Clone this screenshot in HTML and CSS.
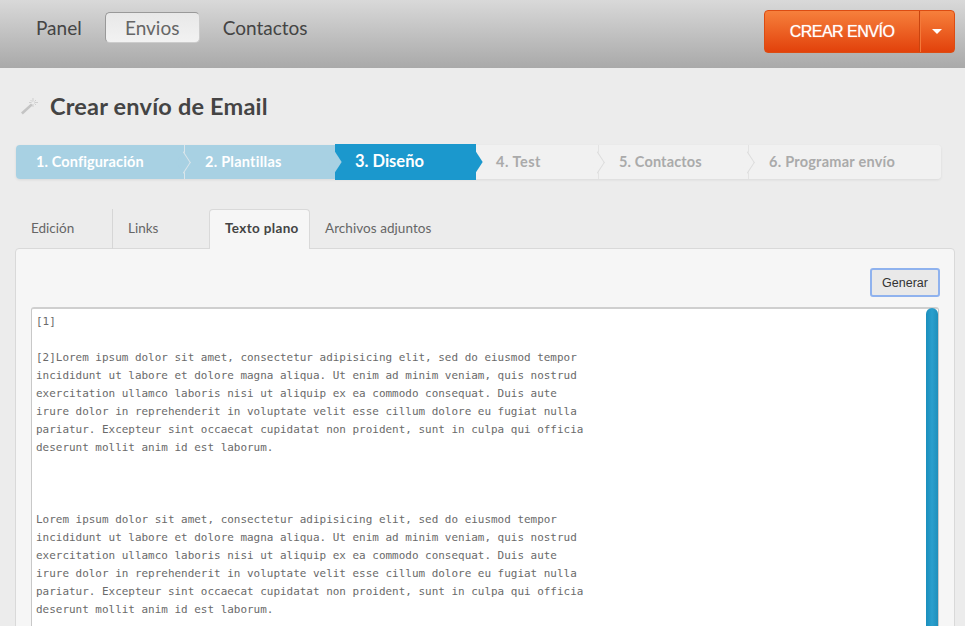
FILE: index.html
```html
<!DOCTYPE html>
<html lang="es">
<head>
  <meta charset="UTF-8">
  <meta name="viewport" content="width=device-width, initial-scale=1.0">
  <title>Crear envío de Email</title>
  <link rel="stylesheet" href="styles.css">
</head>
<body>
  <header class="topbar">
    <nav class="nav">
      <a class="nav-item">Panel</a>
      <a class="nav-item active">Envios</a>
      <a class="nav-item">Contactos</a>
    </nav>
    <div class="create-btn">
      <span class="create-main">CREAR ENVÍO</span>
      <span class="create-caret"><i></i></span>
    </div>
  </header>

  <main class="content">
    <h1 class="title">
      <svg class="wand" width="18" height="18" viewBox="0 0 18 18">
        <path d="M1 15.5 L11 6.5 L12.8 8.3 L2.8 17.5 Z" fill="#c4c4c4"/>
        <path d="M13 1v3.5M13 7v3M9 5.5h2.5M14.5 5.5H18M10.5 3l1.5 1.5M14.5 6.5 16 8M14.5 4.5 16 3" stroke="#cfcfcf" stroke-width="1" fill="none"/>
      </svg>
      Crear envío de Email
    </h1>

    <ol class="steps">
      <li class="step done s1">1. Configuración</li>
      <li class="step done s2">2. Plantillas</li>
      <li class="step current s3">3. Diseño</li>
      <li class="step s4">4. Test</li>
      <li class="step s5">5. Contactos</li>
      <li class="step s6">6. Programar envío</li>
    </ol>

    <ul class="tabs">
      <li class="tab t1">Edición</li>
      <li class="tab t2">Links</li>
      <li class="tab t3 active">Texto plano</li>
      <li class="tab t4">Archivos adjuntos</li>
    </ul>

    <section class="panel">
      <div class="panel-actions">
        <button class="generate" type="button">Generar</button>
      </div>
      <div class="plain-text">
        <pre>[1]

[2]Lorem ipsum dolor sit amet, consectetur adipisicing elit, sed do eiusmod tempor
incididunt ut labore et dolore magna aliqua. Ut enim ad minim veniam, quis nostrud
exercitation ullamco laboris nisi ut aliquip ex ea commodo consequat. Duis aute
irure dolor in reprehenderit in voluptate velit esse cillum dolore eu fugiat nulla
pariatur. Excepteur sint occaecat cupidatat non proident, sunt in culpa qui officia
deserunt mollit anim id est laborum.



Lorem ipsum dolor sit amet, consectetur adipisicing elit, sed do eiusmod tempor
incididunt ut labore et dolore magna aliqua. Ut enim ad minim veniam, quis nostrud
exercitation ullamco laboris nisi ut aliquip ex ea commodo consequat. Duis aute
irure dolor in reprehenderit in voluptate velit esse cillum dolore eu fugiat nulla
pariatur. Excepteur sint occaecat cupidatat non proident, sunt in culpa qui officia
deserunt mollit anim id est laborum.</pre>
        <div class="scroll-track"><div class="scroll-thumb"></div></div>
      </div>
    </section>
  </main>
</body>
</html>
```

FILE: styles.css
```css
* {
  margin: 0;
  padding: 0;
  box-sizing: border-box;
}

html, body {
  height: 626px;
  overflow: hidden;
}

body {
  background: #ececec;
  font-family: 'Lato', 'Open Sans', sans-serif;
  color: #444;
}

/* top bar */
.topbar {
  height: 68px;
  background: linear-gradient(to bottom, #d9d9d9, #a9a9a9);
  display: flex;
  justify-content: space-between;
  align-items: flex-start;
  padding: 10px 10px 0 36px;
}

.nav {
  display: flex;
  align-items: center;
  padding-top: 2px;
  height: 33px;
}

.nav-item {
  font-size: 19px;
  color: #444;
  height: 31px;
  line-height: 31px;
  margin-right: 23px;
}

.nav-item.active {
  width: 95px;
  text-align: center;
  line-height: 29px;
  color: #666;
  background: linear-gradient(to bottom, #e8e8e8, #f2f2f2);
  border: 1px solid #999;
  border-bottom-color: #ccc;
  border-right-color: #ccc;
  border-radius: 5px;
}

.create-btn {
  display: flex;
  width: 191px;
  height: 43px;
  color: #fff;
  background: linear-gradient(to bottom, #f6803c, #e2410b);
  border: 1px solid #dc4c12;
  border-radius: 4px;
}

.create-main {
  width: 155px;
  text-align: center;
  font-family: 'Liberation Sans', sans-serif;
  font-size: 16px;
  letter-spacing: -0.5px;
  line-height: 42px;
  text-shadow: 0 0 1px rgba(255, 255, 255, 0.7);
  border-right: 1px solid #c9440f;
}

.create-caret {
  flex: 1;
  display: flex;
  align-items: center;
  justify-content: center;
  box-shadow: inset 1px 0 0 #f4793a;
}

.create-caret i {
  border-top: 5px solid #fff;
  border-left: 5px solid transparent;
  border-right: 5px solid transparent;
}

/* page */
.content {
  padding: 0 10px 0 15px;
}

.title {
  display: flex;
  align-items: center;
  gap: 12px;
  height: 24px;
  margin: 26px 0 0 5px;
  font-size: 23.5px;
  letter-spacing: 0.2px;
  font-weight: 700;
  color: #444;
}

/* wizard steps */
.steps {
  list-style: none;
  display: flex;
  width: 925px;
  height: 34px;
  margin: 27px 0 0 1px;
  border-radius: 4px;
  box-shadow: 0 1px 3px rgba(0, 0, 0, 0.08);
}

.step {
  position: relative;
  height: 34px;
  line-height: 34px;
  font-size: 14.5px;
  letter-spacing: 0.25px;
  font-weight: 700;
  color: #aaa;
  background: #f1f1f1;
  padding-left: 20px;
}

.step.done {
  color: #fff;
  background: #a8d1e3;
}

.step.s1 { width: 169px; letter-spacing: 0.12px; border-radius: 4px 0 0 4px; }
.step.s2 { width: 150px; }
.step.s3 { width: 141px; }
.step.s4 { width: 123px; letter-spacing: 0.5px; }
.step.s5 { width: 150px; letter-spacing: 0.15px; }
.step.s6 { width: 192px; border-radius: 0 4px 4px 0; }

.step.current {
  height: 36px;
  margin-top: -1px;
  line-height: 35px;
  font-size: 16.5px;
  letter-spacing: 0;
  color: #fff;
  background: #1b98cd;
}

/* chevrons between the steps */
.step::after {
  content: "";
  position: absolute;
  z-index: 1;
  top: 11px;
  right: -6px;
  width: 12px;
  height: 12px;
  transform: rotate(45deg) skew(12deg, 12deg);
  background: inherit;
  border-top: 1px solid #dcdcdc;
  border-right: 1px solid #dcdcdc;
}

.step.done::after {
  border-color: #dbe6eb;
}

.step.current::after {
  top: 12px;
  border: 0;
}

.step.s2::after {
  border: 0;
}

.step.s1, .step.s4, .step.s5 {
  border-right: 1px solid #e3e3e3;
}

.step.s1 {
  border-right-color: #dbe6eb;
}

.step.s6::after {
  display: none;
}

/* tabs */
.tabs {
  list-style: none;
  display: flex;
  height: 40px;
  margin: 30px 0 0 1px;
  font-size: 13.5px;
  color: #666;
}

.tab {
  height: 40px;
  line-height: 38px;
  padding-left: 15px;
}

.tab.t1 { width: 97px; border-right: 1px solid #d6d6d6; }
.tab.t2 { width: 96px; }
.tab.t3 { width: 101px; }
.tab.t4 { letter-spacing: 0.05px; }

.tab.active {
  position: relative;
  z-index: 1;
  line-height: 37px;
  font-weight: 700;
  letter-spacing: 0.35px;
  color: #444;
  background: #f6f6f6;
  border: 1px solid #d9d9d9;
  border-bottom: 0;
  border-radius: 4px 4px 0 0;
}

/* panel */
.panel {
  background: #f6f6f6;
  border: 1px solid #d9d9d9;
  border-radius: 4px;
  height: 400px;
  margin-top: -1px;
  padding: 19px 15px 0;
}

.panel-actions {
  display: flex;
  justify-content: flex-end;
  height: 39px;
  margin-right: -1px;
}

.generate {
  width: 70px;
  height: 29px;
  font-family: 'Liberation Sans', sans-serif;
  font-size: 12.5px;
  color: #333;
  background: #e9e9e9;
  border: 2px solid #8fb2ee;
  border-radius: 3px;
}

.plain-text {
  position: relative;
  height: 340px;
  background: #fff;
  border: 1px solid #c8c8c8;
  border-top: 2px solid #cfcfcf;
  border-radius: 3px;
  padding: 4px;
}

.plain-text pre {
  font-family: 'DejaVu Sans Mono', 'Liberation Mono', monospace;
  font-size: 10.96px;
  line-height: 18px;
  color: #6a6a6a;
}

.scroll-track {
  position: absolute;
  top: -1px;
  right: 0;
  bottom: 0;
  width: 13px;
}

.scroll-thumb {
  width: 12px;
  height: 100%;
  margin-left: 1px;
  background: linear-gradient(to right, #1b8fbd, #2a9fcd 50%, #1f8fbb);
  border-radius: 6px 6px 0 0;
}
```
